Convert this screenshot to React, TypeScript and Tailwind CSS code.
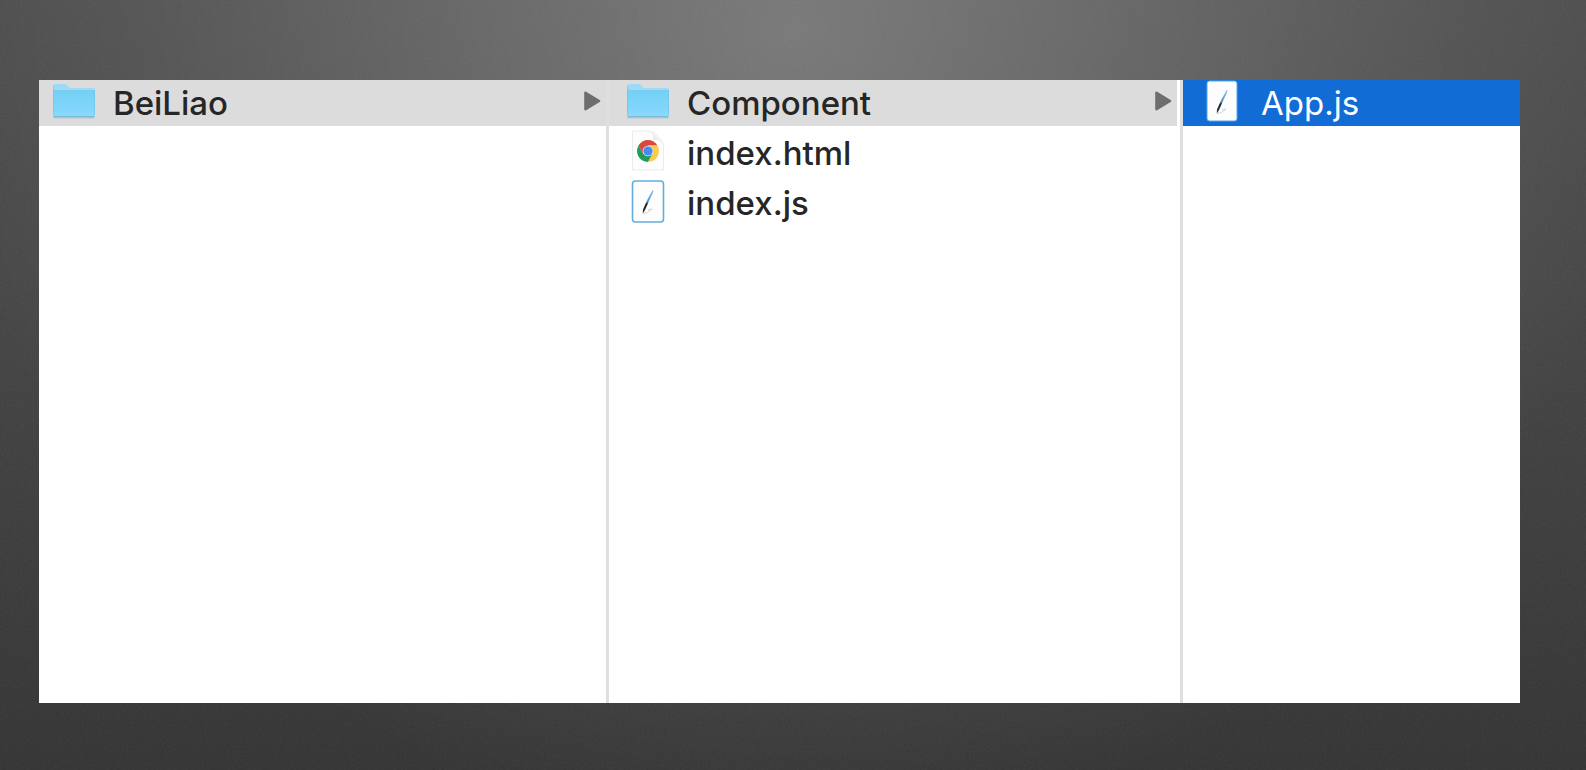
import type { ReactNode } from "react";

function FolderIcon() {
  return (
    <svg viewBox="0 0 42 36" className="h-9 w-[42px]" aria-hidden="true">
      <defs>
        <linearGradient id="folder-front" x1="0" y1="0" x2="0" y2="1">
          <stop offset="0" stopColor="#74d0f7" />
          <stop offset="1" stopColor="#84d8fb" />
        </linearGradient>
      </defs>
      <path d="M0 5v28.500q0 2 2 2h38q2 0 2-2V7z" fill="#8f9ca3" opacity=".45" />
      <path d="M0 3q0-2 2-2h9.500q1.500 0 2.500 1.200L15.500 4q.8 1 2 1H40q2 0 2 2v25q0 2-2 2H2q-2 0-2-2z" fill="#9adcf8" />
      <path d="M0 8h42v22H0z" fill="url(#folder-front)" />
      <path d="M0 7.500h42" stroke="#7ccbea" strokeWidth="1" />
      <path d="M0 30h42v2q0 2-2 2H2q-2 0-2-2z" fill="#90d6f5" />
      <path d="M1 33.500h40" stroke="#74bcdc" strokeWidth="1" />
      <path d="M.4 3v29M41.600 7v25" stroke="#74c4e6" strokeWidth=".8" />
    </svg>
  );
}

function ChromeFileIcon() {
  return (
    <svg viewBox="0 0 34 42" className="h-[42px] w-[34px]" aria-hidden="true">
      <defs>
        <linearGradient id="page-fold" x1="0" y1="1" x2="1" y2="0">
          <stop offset="0" stopColor="#c9c9c9" />
          <stop offset=".5" stopColor="#efefef" />
          <stop offset="1" stopColor="#ffffff" />
        </linearGradient>
      </defs>
      <path d="M1.500 1h16q4 0 7 3l5.500 5.500q2.500 3 2.500 6V40h-31z" fill="#fdfdfd" stroke="#ebebeb" />
      <path d="M18 1q5 2.500 4 9 6.500-1 10.500 5 0-3-2.500-5.500l-5.500-5.500q-3-3-6.500-3z" fill="url(#page-fold)" />
      <g transform="translate(17 21)">
        <path d="M-9.500-5.500A11 11 0 0 1 9.500-5.500H0L-4.800 2.700z" fill="#d9483f" />
        <path d="M-9.500-5.500A11 11 0 0 0 0 11L4.800 2.700-4.800 2.700z" fill="#209b58" />
        <path d="M9.500-5.500A11 11 0 0 1 0 11L4.800 2.700 0-5.500z" fill="#fdcb48" />
        <circle r="5.300" fill="#dfe8f8" />
        <circle r="4.600" fill="#4a88f1" />
      </g>
    </svg>
  );
}

function ScriptFileIcon({ selected = false }: { selected?: boolean }) {
  return (
    <svg viewBox="0 0 34 44" className="h-11 w-[34px]" aria-hidden="true">
      <defs>
        <linearGradient id="pen" x1="0" y1="0" x2="0" y2="1">
          <stop offset="0" stopColor="#8fbfe4" />
          <stop offset=".5" stopColor="#4f8fc4" />
          <stop offset=".58" stopColor="#1b2430" />
          <stop offset=".9" stopColor="#2e2e2e" />
          <stop offset="1" stopColor="#a8a8a8" />
        </linearGradient>
      </defs>
      {selected ? (
        <rect x="2" y="2" width="30" height="40" rx="2.500" fill="#fdfdfd" stroke="#55a9e8" strokeWidth="1" />
      ) : (
        <rect x="1.500" y="2" width="31" height="41" rx="3" fill="#fdfdfd" stroke="#62aee0" strokeWidth="1.600" />
      )}
      <path d="M12 34.500q4 .5 9-4.500l-4 1" fill="none" stroke="#cfcfcf" strokeWidth=".9" />
      <path d="M21.700 11q1 .2.700 1.500L18 22l-4 9-2.300 4 .3-4.500 4.200-9.500z" fill="url(#pen)" />
    </svg>
  );
}

function Arrow() {
  return (
    <svg viewBox="0 0 18 20" className="h-5 w-[18px] shrink-0" aria-hidden="true">
      <path d="M2.500 1.800 16 10 2.500 18.200z" fill="#6e6e6e" stroke="#6e6e6e" strokeWidth="2.600" strokeLinejoin="round" />
    </svg>
  );
}

function Grain() {
  return (
    <svg className="pointer-events-none absolute inset-0 h-full w-full opacity-6" aria-hidden="true">
      <filter id="grain">
        <feTurbulence type="fractalNoise" baseFrequency=".45" numOctaves="2" seed="4" />
        <feColorMatrix type="saturate" values="0" />
      </filter>
      <rect width="100%" height="100%" filter="url(#grain)" />
    </svg>
  );
}

type EntryProps = {
  icon: ReactNode;
  name: string;
  className?: string;
  expandable?: boolean;
};

function Entry({ icon, name, className = "px-[18px] font-medium", expandable = false }: EntryProps) {
  return (
    <li>
      <button type="button" className={`flex h-[46px] w-full items-center text-left ${className}`}>
        <span className="mr-[18px] flex w-[42px] shrink-0 justify-center pb-1">{icon}</span>
        <span className="grow whitespace-nowrap">{name}</span>
        {expandable && (
          <span className="pb-1">
            <Arrow />
          </span>
        )}
      </button>
    </li>
  );
}

export default function App() {
  return (
    <div className="relative flex min-h-screen flex-col bg-[radial-gradient(ellipse_54%_105%_at_50%_4%,#ffffff42_0%,#ffffff2a_35%,#ffffff0e_75%,#ffffff00_100%),linear-gradient(#4c4c4c,#464646_35%,#343434)] pt-20 pr-[66px] pb-[67px] pl-[39px] font-['Inter',sans-serif] text-[33px] leading-[46px] text-[#262626]">
      <Grain />
      <main className="relative grid grow grid-cols-[570fr_574fr_337fr] bg-white">
        <ul className="border-r-3 border-[#dfdfdf]">
          <Entry icon={<FolderIcon />} name="BeiLiao" className="bg-[#dcdcdc] pr-[5px] pl-[14px] font-medium" expandable />
        </ul>
        <ul className="flex flex-col gap-1 border-r-3 border-[#dfdfdf]">
          <li className="pr-[3px]">
            <ul>
              <Entry icon={<FolderIcon />} name="Component" className="bg-[#dcdcdc] pr-[5px] pl-[18px] font-medium" expandable />
            </ul>
          </li>
          <Entry icon={<ChromeFileIcon />} name="index.html" />
          <Entry icon={<ScriptFileIcon />} name="index.js" />
        </ul>
        <ul>
          <Entry icon={<ScriptFileIcon selected />} name="App.js" className="bg-[#116cd6] px-[18px] font-normal text-white" />
        </ul>
      </main>
    </div>
  );
}
